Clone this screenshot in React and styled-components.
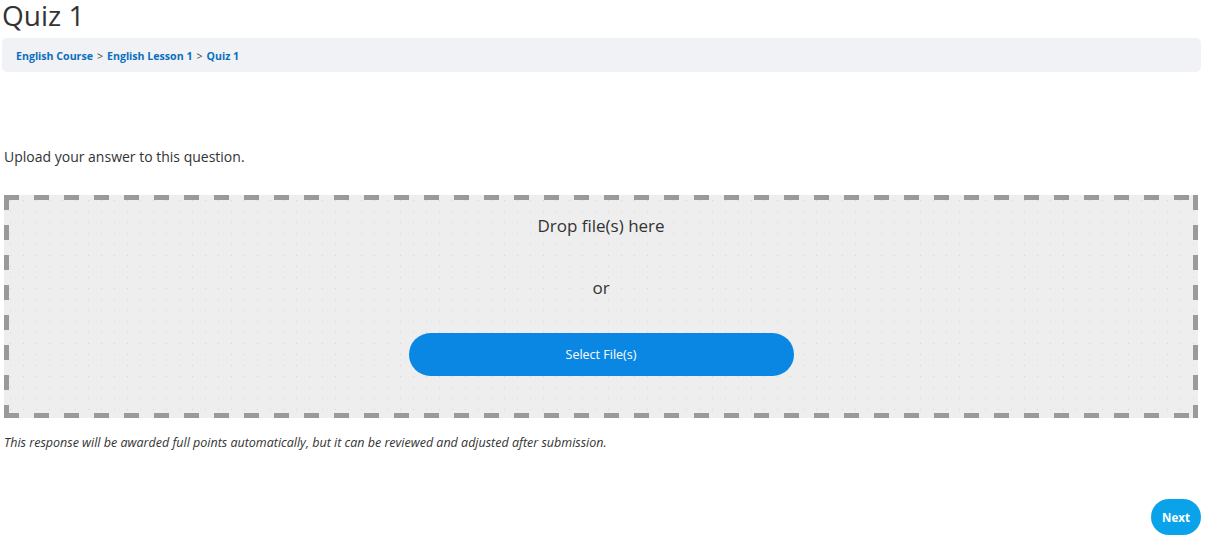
import React from "react";
import styled, { createGlobalStyle } from "styled-components";

const Global = createGlobalStyle`
  html, body { margin: 0; padding: 0; background: #fff; }
  body { font-family: "Open Sans", "Noto Sans", sans-serif; color: #333; }
`;

const Page = styled.div`
  padding: 0 24px 0 2px;
  display: flex;
  flex-direction: column;
`;

const Title = styled.h1`
  margin: 0;
  height: 38px;
  font-size: 28px;
  line-height: 31px;
  font-weight: 400;
  color: #333;
`;

const Breadcrumb = styled.nav`
  height: 34px;
  box-sizing: border-box;
  background: #f1f2f6;
  border-radius: 5px;
  display: flex;
  align-items: center;
  padding: 1px 14px 0;
  font-size: 10.6px;
  gap: 4px;
`;

const Crumb = styled.a`
  color: #0a6fbd;
  font-weight: 700;
  text-decoration: none;
`;

const Sep = styled.span`
  color: #444;
`;

const Content = styled.div`
  padding: 74px 0 0 2px;
  display: flex;
  flex-direction: column;
`;

const Prompt = styled.p`
  margin: 0;
  font-size: 14px;
  line-height: 22px;
  color: #333;
`;

const dash = "#9a9a9a";

const DropZone = styled.div`
  margin: 27px 3px 0 0;
  height: 223px;
  box-sizing: border-box;
  padding: 20px 5px 0;
  background-color: #eeeeee;
  background-image:
    repeating-linear-gradient(to right, ${dash} 0 15px, transparent 15px 30px),
    repeating-linear-gradient(to right, ${dash} 0 15px, transparent 15px 30px),
    repeating-linear-gradient(to bottom, ${dash} 0 15px, transparent 15px 30px),
    repeating-linear-gradient(to bottom, ${dash} 0 15px, transparent 15px 30px),
    radial-gradient(circle, #d6d6d6 0.55px, transparent 0.85px);
  background-size: 100% 5px, 100% 5px, 5px 100%, 5px 100%, 13px 11px;
  background-position: 0 0, 0 100%, 0 0, 100% 0, 0 0;
  background-repeat: no-repeat, no-repeat, no-repeat, no-repeat, repeat;
  display: flex;
  flex-direction: column;
  align-items: center;
`;

const DropText = styled.div`
  font-size: 17px;
  line-height: 22px;
  color: #333;
`;

const OrText = styled.div`
  margin-top: 40px;
  font-size: 17px;
  line-height: 22px;
  color: #333;
`;

const SelectButton = styled.button`
  margin-top: 34px;
  width: 385px;
  height: 43px;
  border: none;
  border-radius: 22px;
  background: #0a87e3;
  color: #fff;
  font-family: inherit;
  font-size: 12.5px;
  cursor: pointer;
`;

const Note = styled.p`
  margin: 15px 0 0;
  font-size: 12.5px;
  line-height: 20px;
  font-style: italic;
  color: #333;
`;

const Footer = styled.div`
  display: flex;
  justify-content: flex-end;
  margin-top: 46px;
`;

const NextButton = styled.button`
  width: 50px;
  height: 36px;
  border: none;
  border-radius: 18px;
  background: #0aa3ea;
  color: #fff;
  font-family: inherit;
  font-weight: 700;
  font-size: 11.5px;
  cursor: pointer;
  padding: 0;
`;

export default function App() {
  return (
    <>
      <Global />
      <Page>
        <Title>Quiz 1</Title>
        <Breadcrumb>
          <Crumb href="#">English Course</Crumb>
          <Sep>&gt;</Sep>
          <Crumb href="#">English Lesson 1</Crumb>
          <Sep>&gt;</Sep>
          <Crumb href="#">Quiz 1</Crumb>
        </Breadcrumb>
        <Content>
          <Prompt>Upload your answer to this question.</Prompt>
          <DropZone>
            <DropText>Drop file(s) here</DropText>
            <OrText>or</OrText>
            <SelectButton>Select File(s)</SelectButton>
          </DropZone>
          <Note>
            This response will be awarded full points automatically, but it can be reviewed and adjusted after submission.
          </Note>
          <Footer>
            <NextButton>Next</NextButton>
          </Footer>
        </Content>
      </Page>
    </>
  );
}
